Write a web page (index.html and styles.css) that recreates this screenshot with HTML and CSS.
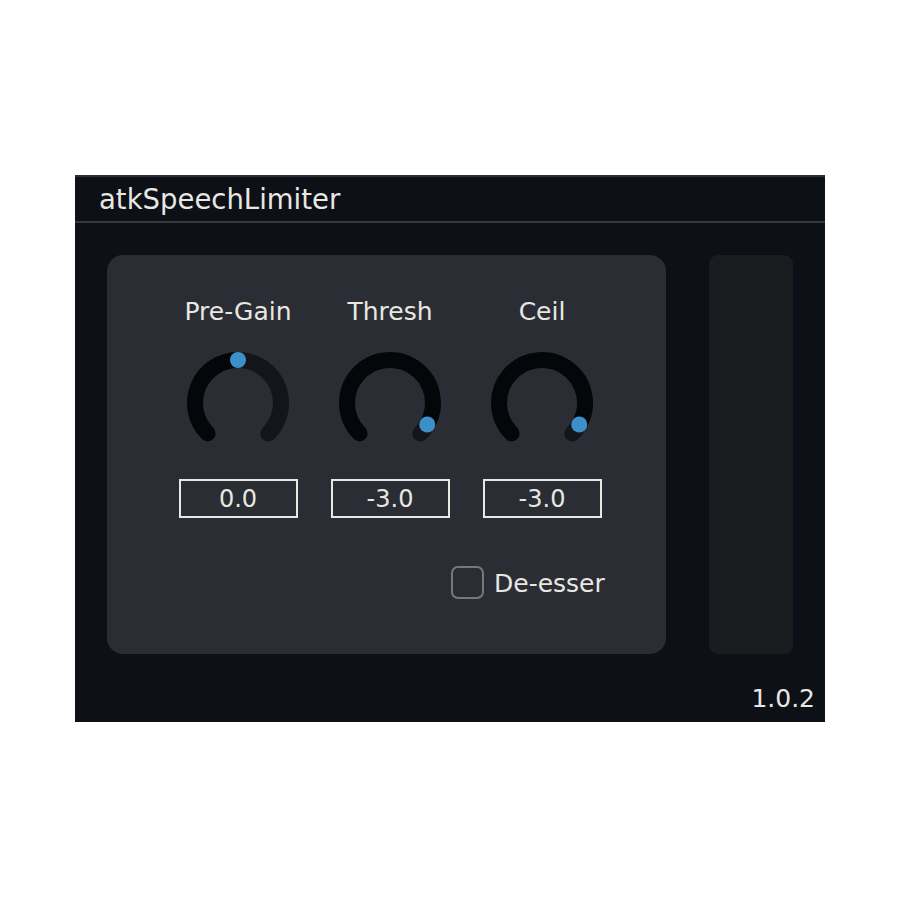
FILE: index.html
```html
<!DOCTYPE html>
<html>
<head>
<meta charset="utf-8">
<link rel="stylesheet" href="styles.css">
</head>
<body>
<div class="window">
  <div class="titlebar"><span class="title">atkSpeechLimiter</span></div>
  <div class="content">
    <div class="panel">
      <div class="knobs">
        <div class="knob">
          <div class="label">Pre-Gain</div>
          <svg class="dial" viewBox="0 0 110 110" width="110" height="110">
            <path d="M24.59 85.41 A43 43 0 0 1 55 12" class="arc-val"/>
            <path d="M55 12 A43 43 0 0 1 85.41 85.41" class="arc-rest"/>
            <circle cx="55" cy="12" r="8" class="dot"/>
          </svg>
          <div class="value">0.0</div>
        </div>
        <div class="knob">
          <div class="label">Thresh</div>
          <svg class="dial" viewBox="0 0 110 110" width="110" height="110">
            <path d="M24.59 85.41 A43 43 0 1 1 92.24 76.5" class="arc-val"/>
            <path d="M92.24 76.5 A43 43 0 0 1 85.41 85.41" class="arc-rest"/>
            <circle cx="92.24" cy="76.5" r="8" class="dot"/>
          </svg>
          <div class="value">-3.0</div>
        </div>
        <div class="knob">
          <div class="label">Ceil</div>
          <svg class="dial" viewBox="0 0 110 110" width="110" height="110">
            <path d="M24.59 85.41 A43 43 0 1 1 92.24 76.5" class="arc-val"/>
            <path d="M92.24 76.5 A43 43 0 0 1 85.41 85.41" class="arc-rest"/>
            <circle cx="92.24" cy="76.5" r="8" class="dot"/>
          </svg>
          <div class="value">-3.0</div>
        </div>
      </div>
      <div class="toggle-row">
        <span class="checkbox"></span>
        <span class="toggle-label">De-esser</span>
      </div>
    </div>
    <div class="meter"></div>
  </div>
  <div class="footer"><span class="version">1.0.2</span></div>
</div>
</body>
</html>
```

FILE: styles.css
```css
html, body {
  margin: 0;
  padding: 0;
  background: #ffffff;
}
body {
  font-family: "DejaVu Sans", Verdana, sans-serif;
  color: #e9e7e1;
}
.window {
  margin: 175px 0 0 75px;
  width: 750px;
  height: 547px;
  background: #0d1017;
  display: flex;
  flex-direction: column;
  box-sizing: border-box;
  border-top: 2px solid #2b2e33;
}
.titlebar {
  height: 44px;
  border-bottom: 2px solid #34373c;
  display: flex;
  align-items: center;
  padding-left: 24px;
  box-sizing: content-box;
}
.title {
  font-size: 27.5px;
  line-height: 1;
  margin-top: 2px;
}
.content {
  display: flex;
  padding: 32px 32px 0 32px;
  gap: 43px;
}
.panel {
  width: 559px;
  height: 399px;
  background: #2a2d33;
  border-radius: 16px;
  box-sizing: border-box;
  padding: 40px 0 0 55px;
  display: flex;
  flex-direction: column;
}
.knobs {
  display: flex;
}
.knob {
  width: 152px;
  display: flex;
  flex-direction: column;
  align-items: center;
}
.label {
  font-size: 25px;
  line-height: 34px;
  height: 34px;
}
.dial {
  display: block;
  margin-top: 19px;
}
.arc-val, .arc-rest {
  fill: none;
  stroke-width: 16;
  stroke-linecap: round;
}
.arc-val { stroke: #04060a; }
.arc-rest { stroke: #13151a; }
.dot { fill: #3d8fca; }
.value {
  margin-top: 21px;
  width: 119px;
  height: 39px;
  box-sizing: border-box;
  border: 2px solid #e9e7e1;
  font-size: 24px;
  line-height: 37px;
  text-align: center;
}
.toggle-row {
  display: flex;
  align-items: center;
  margin-top: 48px;
  margin-left: 289px;
  gap: 10px;
}
.checkbox {
  width: 33px;
  height: 33px;
  box-sizing: border-box;
  border: 2px solid #76787c;
  border-radius: 7px;
}
.toggle-label {
  font-size: 25px;
  line-height: 36px;
  height: 33px;
}
.meter {
  width: 84px;
  height: 399px;
  background: #1b1c1f;
  border-radius: 9px;
}
.footer {
  flex: 1;
  display: flex;
  justify-content: flex-end;
  align-items: center;
  padding-right: 10px;
}
.version {
  font-size: 25px;
  line-height: 1;
  margin-top: 20px;
}
```
